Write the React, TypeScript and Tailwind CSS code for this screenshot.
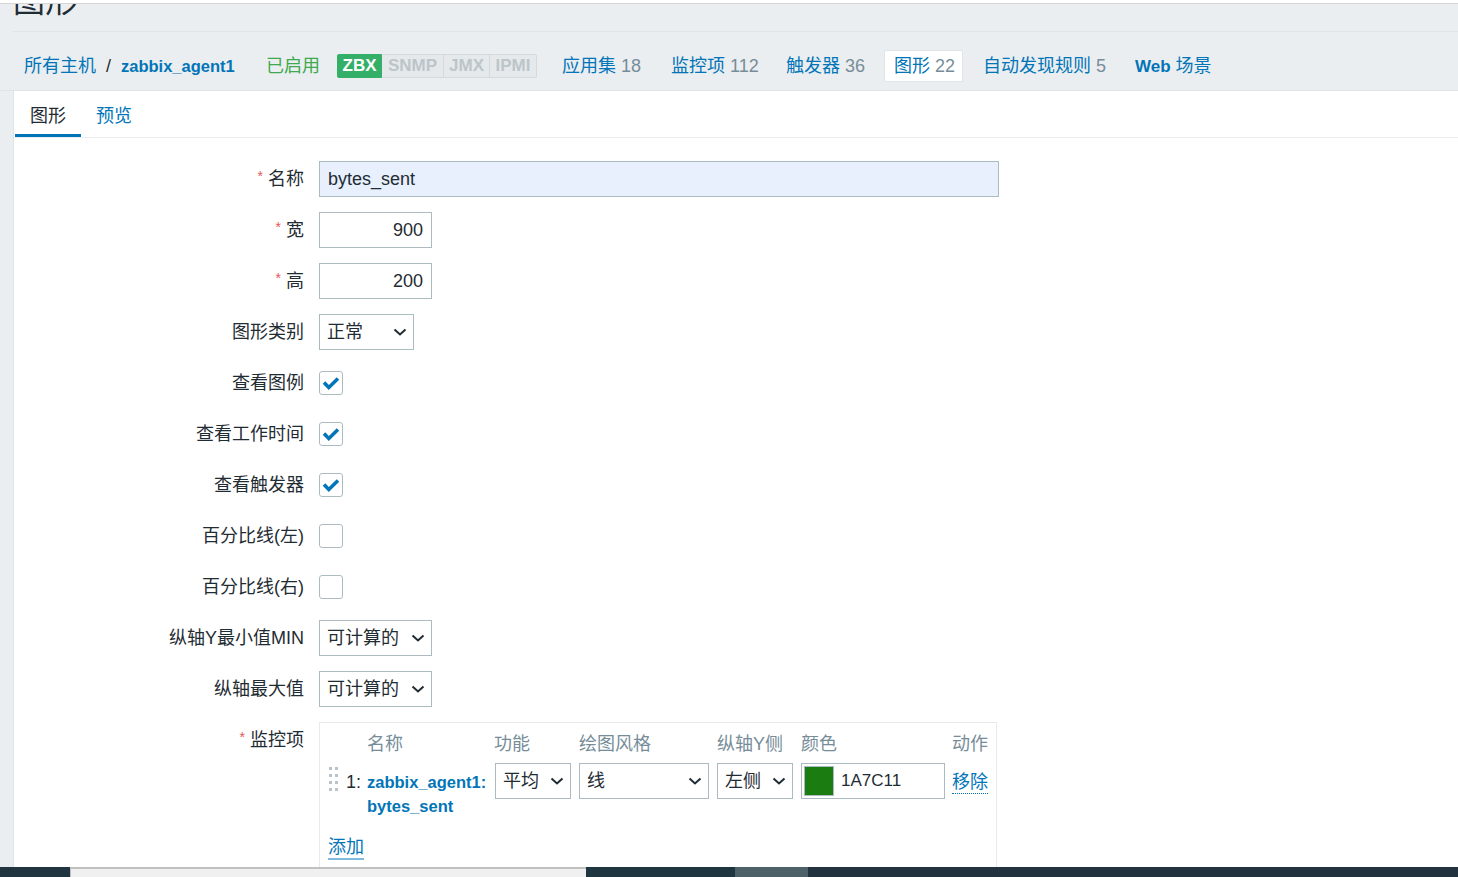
import React from "react";

const Chevron = () => (
  <svg width="14" height="8" viewBox="0 0 14 8" className="shrink-0">
    <polyline points="1.5,1.5 7,6.5 12.5,1.5" fill="none" stroke="#1f2c33" strokeWidth="2" />
  </svg>
);

function Select({ className, text }: { className: string; text: string }) {
  return (
    <div className={"h-[36px] shrink-0 border border-[#acbbc2] bg-white flex items-center justify-between pl-[7px] pr-[6px] " + className}>
      <span>{text}</span>
      <Chevron />
    </div>
  );
}

function Checkbox({ checked }: { checked: boolean }) {
  return (
    <div className="w-[24px] h-[24px] border border-[#acbbc2] rounded-[3px] bg-white flex items-center justify-center">
      {checked && (
        <svg width="22" height="22" viewBox="0 0 22 22">
          <polyline points="4,10.5 8.8,15.5 18,6.5" fill="none" stroke="#0275b8" strokeWidth="3.5" />
        </svg>
      )}
    </div>
  );
}

function Row({ label, req, children, top }: { label: string; req?: boolean; children: React.ReactNode; top?: boolean }) {
  return (
    <div className={"flex " + (top ? "items-start" : "items-center")}>
      <div className="w-[290px] h-[36px] shrink-0 flex items-center justify-end">
        {req && <span className="text-[#e45959] text-[14px] mr-[5px] -mt-[6px]">*</span>}
        <span>{label}</span>
      </div>
      <div className="ml-[15px] min-h-[36px] flex items-center">{children}</div>
    </div>
  );
}

const Dots = () => (
  <div className="grid grid-cols-2 gap-x-[3px] gap-y-[4px] w-[9px] ml-[1px] mt-[4px]">
    {Array.from({ length: 8 }).map((_, i) => (
      <div key={i} className="w-[3px] h-[3px] bg-[#b8c4ca]" />
    ))}
  </div>
);

export default function App() {
  return (
    <div className="w-[1458px] h-[877px] overflow-hidden bg-[#ebeef0] flex flex-col text-[18px] leading-[24px] text-[#1f2c33] font-['Liberation_Sans','Noto_Sans_CJK_SC',sans-serif]">
      <div className="h-[3px] bg-white shrink-0" />
      <div className="h-px bg-[#d6d6d6] shrink-0" />
      <div className="h-[28px] ml-[13px] border-b border-[#dfe4e7] overflow-hidden shrink-0">
        <h1 className="text-[32px] leading-none -mt-[19px]">图形</h1>
      </div>

      {/* host nav */}
      <div className="h-[59px] border-b border-[#dfe4e7] flex items-center pt-[10px] shrink-0 whitespace-nowrap">
        <div className="w-[266px] pl-[24px] shrink-0 flex items-center">
          <span className="text-[#0275b8]">所有主机</span>
          <span className="ml-[10px]">/</span>
          <span className="ml-[10px] text-[#0275b8] font-bold text-[16.5px]">zabbix_agent1</span>
        </div>
        <div className="w-[71px] shrink-0 text-[#3ea94e]">已启用</div>
        <div className="flex h-[24px] shrink-0 text-[17px] font-bold leading-[22px]">
          <div className="w-[45px] rounded-l-[2px] bg-[#34af67] border border-[#34af67] text-white flex items-center justify-center">ZBX</div>
          <div className="w-[62px] bg-[#e6e9eb] border-y border-r border-[#d3d9dc] text-[#bcc5ca] flex items-center justify-center">SNMP</div>
          <div className="w-[46px] bg-[#e6e9eb] border-y border-r border-[#d3d9dc] text-[#bcc5ca] flex items-center justify-center">JMX</div>
          <div className="w-[47px] rounded-r-[2px] bg-[#e6e9eb] border-y border-r border-[#d3d9dc] text-[#bcc5ca] flex items-center justify-center">IPMI</div>
        </div>
        <div className="w-[109px] ml-[25px] shrink-0">
          <span className="text-[#0275b8]">应用集</span> <span className="text-[#768d99]">18</span>
        </div>
        <div className="w-[115px] shrink-0">
          <span className="text-[#0275b8]">监控项</span> <span className="text-[#768d99]">112</span>
        </div>
        <div className="w-[98px] shrink-0">
          <span className="text-[#0275b8]">触发器</span> <span className="text-[#768d99]">36</span>
        </div>
        <div className="w-[79px] h-[32px] shrink-0 bg-white border border-[#dfe4e7] rounded-[2px] pl-[9px] flex items-center">
          <span className="text-[#0275b8]">图形</span>&nbsp;<span className="text-[#768d99]">22</span>
        </div>
        <div className="w-[152px] ml-[20px] shrink-0">
          <span className="text-[#0275b8]">自动发现规则</span> <span className="text-[#768d99]">5</span>
        </div>
        <div className="shrink-0 text-[#0275b8]">
          <span className="font-bold text-[17px]">Web</span> 场景
        </div>
      </div>

      {/* main panel */}
      <div className="flex-1 min-h-0 overflow-hidden ml-[13px] border-l border-[#dfe4e7] bg-white">
        <div className="h-[47px] border-b border-[#ebeef0] flex">
          <div className="ml-px px-[15px] h-[46px] border-b-[3px] border-[#0275b8] flex items-center pt-[6px]">图形</div>
          <div className="px-[15px] h-[46px] flex items-center pt-[3px] text-[#0275b8]">预览</div>
        </div>

        <div className="pt-[23px] flex flex-col gap-[15px]">
          <Row label="名称" req>
            <div className="w-[680px] h-[36px] border border-[#acbbc2] bg-[#e8f0fe] pl-[8px] flex items-center">bytes_sent</div>
          </Row>
          <Row label="宽" req>
            <div className="w-[113px] h-[36px] border border-[#acbbc2] pr-[8px] flex items-center justify-end">900</div>
          </Row>
          <Row label="高" req>
            <div className="w-[113px] h-[36px] border border-[#acbbc2] pr-[8px] flex items-center justify-end">200</div>
          </Row>
          <Row label="图形类别">
            <Select className="w-[95px]" text="正常" />
          </Row>
          <Row label="查看图例">
            <Checkbox checked />
          </Row>
          <Row label="查看工作时间">
            <Checkbox checked />
          </Row>
          <Row label="查看触发器">
            <Checkbox checked />
          </Row>
          <Row label="百分比线(左)">
            <Checkbox checked={false} />
          </Row>
          <Row label="百分比线(右)">
            <Checkbox checked={false} />
          </Row>
          <Row label="纵轴Y最小值MIN">
            <Select className="w-[113px]" text="可计算的" />
          </Row>
          <Row label="纵轴最大值">
            <Select className="w-[113px]" text="可计算的" />
          </Row>
          <Row label="监控项" req top>
            <div className="w-[678px] h-[200px] border border-[#e6eaec] pl-[8px] pr-[7px] pt-[10px]">
              <div className="flex text-[#768d99] leading-[22px] whitespace-nowrap">
                <div className="w-[39px]" />
                <div className="w-[127px]">名称</div>
                <div className="w-[85px]">功能</div>
                <div className="w-[138px]">绘图风格</div>
                <div className="w-[84px]">纵轴Y侧</div>
                <div className="w-[151px]">颜色</div>
                <div className="w-[36px] text-right">动作</div>
              </div>
              <div className="flex items-start mt-[8px] whitespace-nowrap">
                <div className="w-[18px] shrink-0">
                  <Dots />
                </div>
                <div className="w-[21px] shrink-0 pt-[7px]">1:</div>
                <div className="w-[128px] shrink-0 pt-[7px] text-[#0275b8] font-bold text-[16.5px]">
                  <div>zabbix_agent1:</div>
                  <div>bytes_sent</div>
                </div>
                <Select className="w-[76px]" text="平均" />
                <div className="w-[8px] shrink-0" />
                <Select className="w-[130px]" text="线" />
                <div className="w-[8px] shrink-0" />
                <Select className="w-[76px]" text="左侧" />
                <div className="w-[8px] shrink-0" />
                <div className="w-[144px] h-[36px] shrink-0 border border-[#acbbc2] flex items-center pl-[2px]">
                  <div className="w-[30px] h-[30px] bg-[#1a7c11] border border-[#acbbc2]" />
                  <span className="ml-[7px] text-[17px]">1A7C11</span>
                </div>
                <div className="w-[7px] shrink-0" />
                <div className="pt-[7px]">
                  <span className="text-[#0275b8] border-b border-dotted border-[#0275b8] leading-[22px] inline-block">移除</span>
                </div>
              </div>
              <div className="mt-[17px]">
                <span className="inline-block text-[#0275b8] leading-[22px] border-b-2 border-[#7fbade]">添加</span>
              </div>
            </div>
          </Row>
        </div>
      </div>

      {/* bottom bar */}
      <div className="h-[10px] shrink-0 flex">
        <div className="w-[70px] bg-[#213540]" />
        <div className="w-[516px] bg-[#f0f0f0] border-t-2 border-l border-[#c0c0c0]" />
        <div className="w-[149px] bg-[#1f3641]" />
        <div className="w-[73px] bg-[#4d6168]" />
        <div className="flex-1 bg-[#22323f]" />
      </div>
    </div>
  );
}
